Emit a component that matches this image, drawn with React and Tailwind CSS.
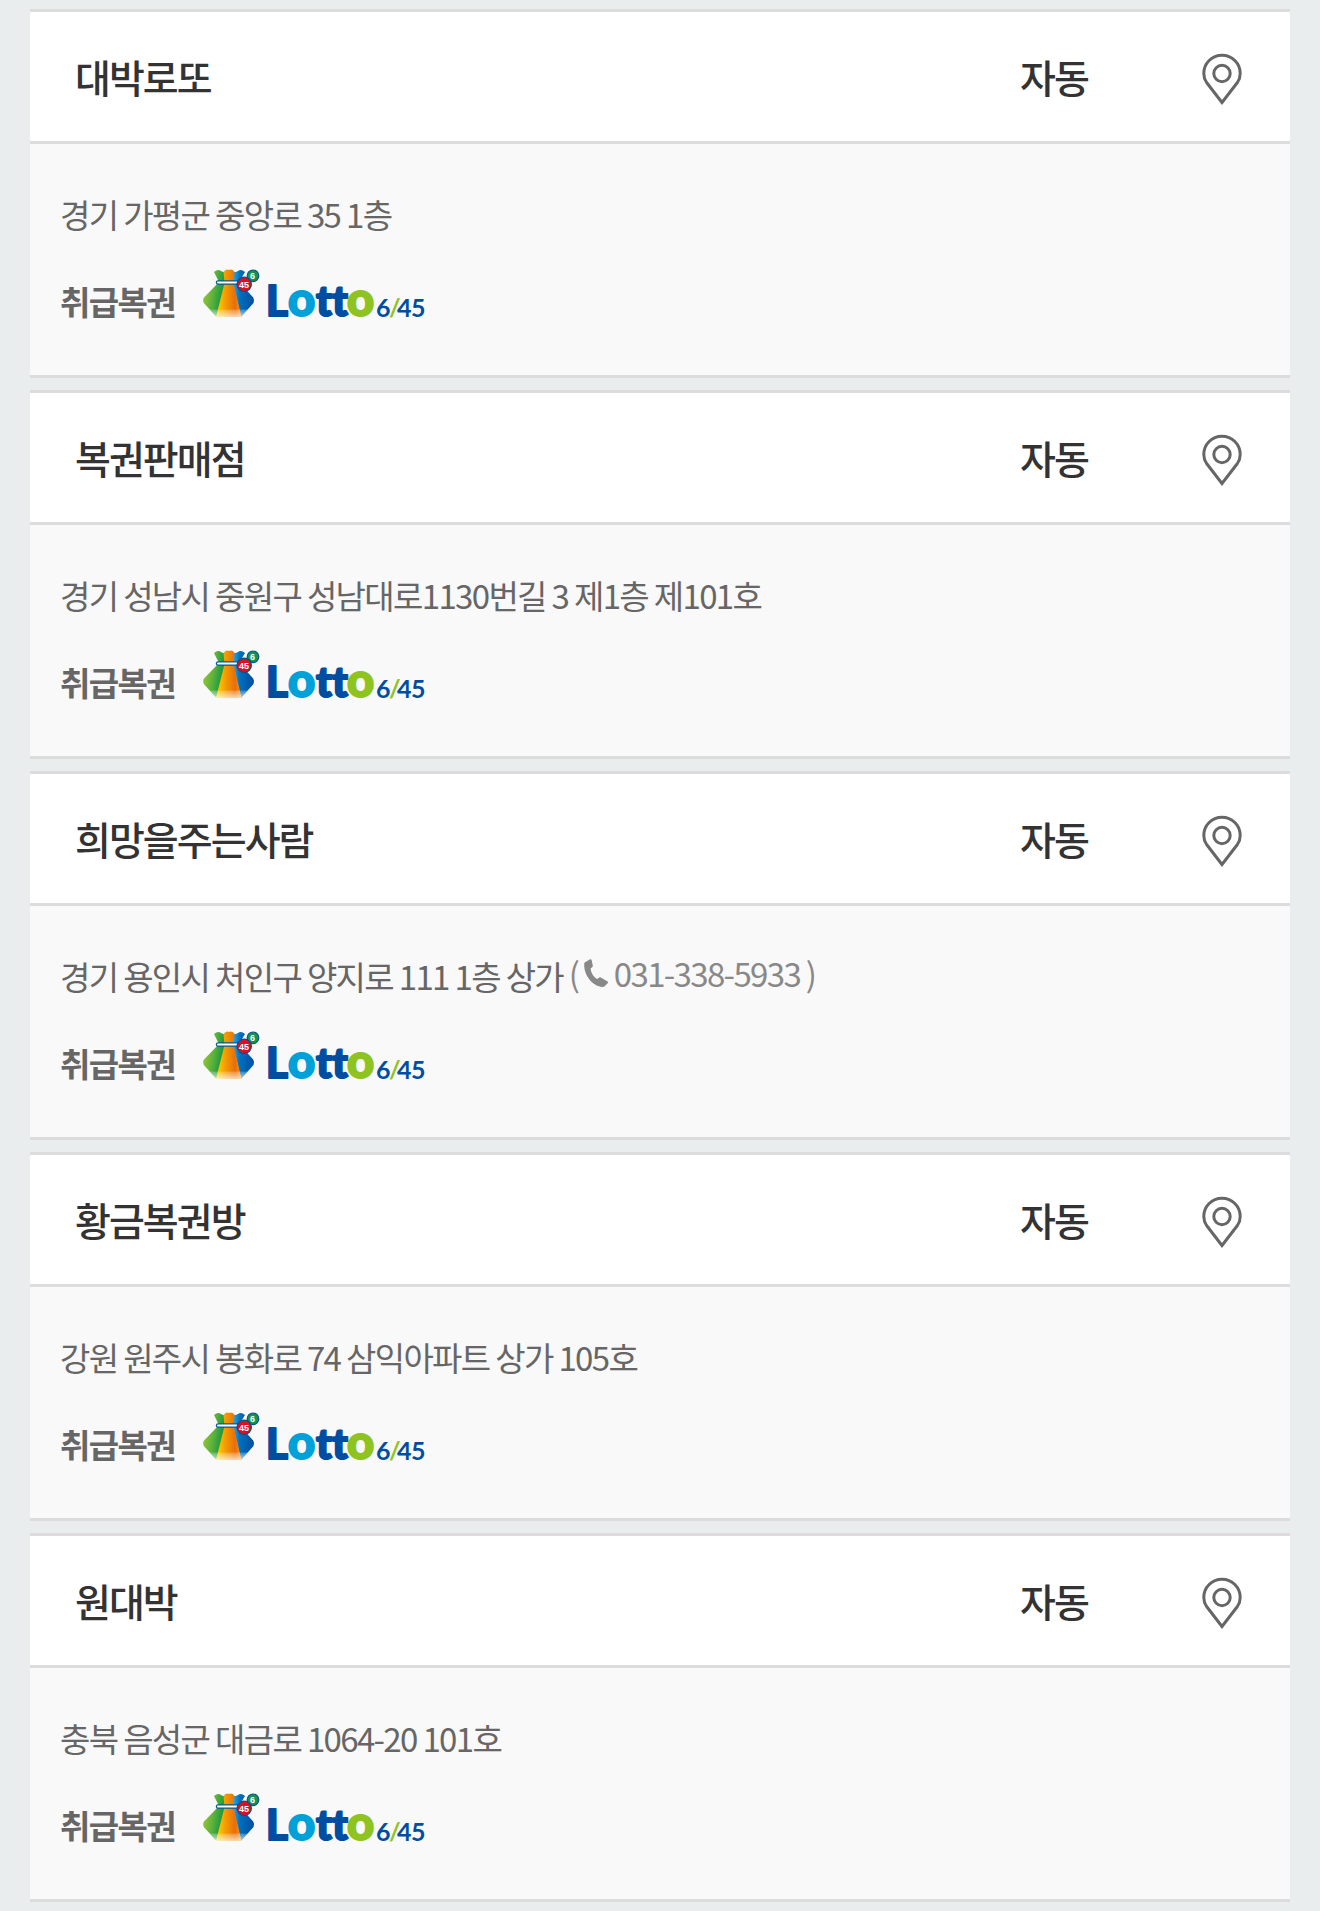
import React from 'react';

const stores = [
  { name: '대박로또', type: '자동', address: '경기 가평군 중앙로 35 1층' },
  { name: '복권판매점', type: '자동', address: '경기 성남시 중원구 성남대로1130번길 3 제1층 제101호' },
  { name: '희망을주는사람', type: '자동', address: '경기 용인시 처인구 양지로 111 1층 상가', phone: '031-338-5933' },
  { name: '황금복권방', type: '자동', address: '강원 원주시 봉화로 74 삼익아파트 상가 105호' },
  { name: '원대박', type: '자동', address: '충북 음성군 대금로 1064-20 101호' },
];

const PinIcon = () => (
  <svg className="w-10 h-14" viewBox="0 0 40 56" fill="none" stroke="#666666" strokeWidth="3" aria-hidden="true">
    <path d="M20 53.5 L4.6 33.5 C2.6 30.7 1.8 27.8 1.8 24.5 C1.8 14 10 6.3 20 6.3 C30 6.3 38.2 14 38.2 24.5 C38.2 27.8 37.4 30.7 35.4 33.5 Z" />
    <circle cx="20" cy="24.5" r="8.2" />
  </svg>
);

const PhoneIcon = () => (
  <svg className="inline-block w-6 h-7 align-baseline" viewBox="0 0 24 28" fill="#888888" aria-hidden="true">
    <path d="M1 3.2 L6.2 0.3 Q7.2 0 7.6 1 L8.8 6.6 Q8.9 7.6 8.1 8.2 L6.6 9.4 C7 14 9.6 17.8 13.3 20 L15.2 18.6 Q16 18.1 16.8 18.6 L23.6 22.6 Q24.4 23.3 23.7 24.2 L20.6 27.3 Q20 28 18.8 28 C7.8 27.4 -0.8 15 0.3 4.4 Q0.4 3.6 1 3.2 Z" />
  </svg>
);

const LottoLogo = ({ id }) => (
  <svg className="w-57 h-16" viewBox="0 0 228 64" role="img" aria-label="Lotto 6/45">
    <defs>
      <linearGradient id={`green-${id}`} x1="0" x2="1" y1="0" y2="0.3">
        <stop offset="0" stopColor="#a5cd39" />
        <stop offset="0.5" stopColor="#62b33a" />
        <stop offset="1" stopColor="#009245" />
      </linearGradient>
      <linearGradient id={`orange-${id}`} x1="0" x2="1" y1="0" y2="0">
        <stop offset="0" stopColor="#ffd500" />
        <stop offset="0.4" stopColor="#f39800" />
        <stop offset="0.75" stopColor="#e96d0c" />
        <stop offset="1" stopColor="#f39a1c" />
      </linearGradient>
      <linearGradient id={`blue-${id}`} x1="0" x2="1" y1="0" y2="0">
        <stop offset="0" stopColor="#35b4e8" />
        <stop offset="0.35" stopColor="#0070bd" />
        <stop offset="1" stopColor="#004da0" />
      </linearGradient>
      <linearGradient id={`shine-${id}`} x1="0" x2="0" y1="0" y2="1">
        <stop offset="0" stopColor="#ffffff" stopOpacity="0.2" />
        <stop offset="1" stopColor="#ffffff" stopOpacity="0.7" />
      </linearGradient>
    </defs>
    {/* Bag */}
    <path d="M11 4 Q15 0.5 18 3 Q21 5 24 3 L23 15 L13.5 49 L0.8 35 Q-0.6 32 1 29.5 L16 14 Z" fill={`url(#green-${id})`} />
    <path d="M42 4 Q38 0.5 35 3 Q32 5 29 3 L30 15 L38 49 L50.5 35 Q51.8 32 50.2 29.5 L36 14 Z" fill={`url(#blue-${id})`} />
    <path d="M20.5 4 Q23.5 0.5 26 2 Q29 0.5 31.5 4 L30.5 15 L38.5 49 L13 49 L21.5 15 Z" fill={`url(#orange-${id})`} />
    <path d="M7 41.5 H45 L38.5 49 H13 Z" fill={`url(#shine-${id})`} />
    <path d="M15 14.5 H37" stroke="#005b95" strokeWidth="4.4" strokeLinecap="round" />
    <path d="M15 14.5 H37" stroke="#ffffff" strokeWidth="2" strokeLinecap="round" />
    {/* Balls */}
    <circle cx="50" cy="7.8" r="5.8" fill="#12944c" stroke="#07558e" strokeWidth="1.2" />
    <text x="49.5" y="11" textAnchor="middle" className="font-['Liberation_Sans'] text-[9px] font-bold" fill="#ffffff">6</text>
    <circle cx="41.2" cy="16.3" r="7.2" fill="#df0f20" stroke="#075087" strokeWidth="1.2" />
    <text x="41" y="19.5" textAnchor="middle" className="font-['Liberation_Sans'] text-[9px] font-bold" fill="#ffffff">45</text>
    {/* Wordmark */}
    <text y="48" className="font-[Lato] text-[42px] font-black" fill="#004ea2" stroke="#004ea2" strokeWidth="2" strokeLinejoin="round">
      <tspan x="63">L</tspan>
      <tspan x="85" className="text-[47px]" fill="#00a0d8" stroke="#00a0d8">o</tspan>
      <tspan x="113">t</tspan>
      <tspan x="129">t</tspan>
      <tspan x="144" className="text-[47px]" fill="#8fc31f" stroke="#8fc31f">o</tspan>
    </text>
    <text y="49" className="font-[Lato] text-[25px] font-bold" fill="#004ea2">
      <tspan x="173">6</tspan>
      <tspan x="186" fill="#8fc31f">/</tspan>
      <tspan x="194">4</tspan>
      <tspan x="208">5</tspan>
    </text>
  </svg>
);

const StoreCard = ({ store, id }) => (
  <li className="border-y-3 border-[#dcdcdc] bg-[#f9f9f9]">
    <div className="flex items-center h-33 pl-[45px] pr-12 bg-white border-b-3 border-[#dcdcdc] text-[#333333]">
      <h2 className="flex-1 text-[39px] leading-[57px] font-medium tracking-tighter">{store.name}</h2>
      <span className="w-[182px] text-[39px] leading-[57px] font-medium tracking-tighter">{store.type}</span>
      <button type="button" aria-label={`${store.name} 위치보기`} className="block">
        <PinIcon />
      </button>
    </div>
    <div className="px-[30px] pt-[46px] pb-[43px] text-[33px] leading-[48px] text-[#666666]">
      <p className="tracking-tighter">
        {store.address}
        {store.phone && (
          <span className="leading-none align-[3px] text-[#888888]">
            {' ( '}
            <a href={`tel:${store.phone}`}>
              <PhoneIcon /> {store.phone}
            </a>
            {' )'}
          </span>
        )}
      </p>
      <div className="flex items-start mt-[30px]">
        <strong className="w-[143px] pt-[9px] font-bold tracking-tighter">취급복권</strong>
        <LottoLogo id={id} />
      </div>
    </div>
  </li>
);

const App = () => (
  <main className="min-h-screen bg-[#e9edee] px-[30px] py-[9px] font-['Noto_Sans_CJK_KR',sans-serif]">
    <ul className="flex flex-col gap-3">
      {stores.map((store, i) => (
        <StoreCard key={store.name} store={store} id={i} />
      ))}
    </ul>
  </main>
);

export default App;
